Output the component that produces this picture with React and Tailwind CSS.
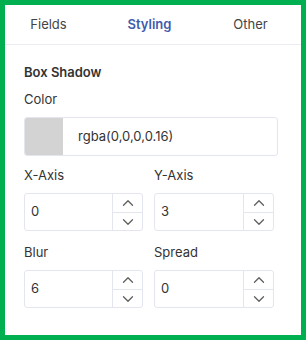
import { ChevronDown, ChevronUp } from "lucide-react";

const TABS = ["Fields", "Styling", "Other"];

function NumberField({ label, value, className = "" }) {
  return (
    <div className={className}>
      <p className="text-[13px] leading-5 text-[#333]">{label}</p>
      <div className="mt-2 flex h-[38px] rounded-[3px] border border-[#e3e6ee] bg-white">
        <div className="flex flex-1 items-center pl-[6px] text-[13px] text-[#333]">{value}</div>
        <div className="flex w-[30px] flex-col border-l border-[#e3e6ee]">
          <button type="button" className="flex flex-1 items-center justify-center text-[#5f5f5f]">
            <ChevronUp size={18} strokeWidth={1.7} />
          </button>
          <button
            type="button"
            className="flex flex-1 items-center justify-center border-t border-[#e3e6ee] text-[#5f5f5f]"
          >
            <ChevronDown size={18} strokeWidth={1.7} />
          </button>
        </div>
      </div>
    </div>
  );
}

export default function App() {
  return (
    <div
      className="h-[340px] w-[306px] overflow-hidden border-[5px] border-[#00b050] bg-white"
      style={{ fontFamily: "Inter, 'Noto Sans', sans-serif" }}
    >
      <div className="flex h-[40px] items-center border-b border-[#ebebf3]">
        <div className="-ml-[7px] grid w-[303px] grid-cols-3">
          {TABS.map((tab) => (
            <span
              key={tab}
              className={
                tab === "Styling"
                  ? "text-center text-[13px] font-semibold text-[#3f5dab]"
                  : "text-center text-[13px] text-[#444]"
              }
            >
              {tab}
            </span>
          ))}
        </div>
      </div>

      <div className="px-[19px] pt-[17px]">
        <p className="text-[13px] font-semibold leading-5 text-[#333]">Box Shadow</p>
        <p className="mt-[7px] text-[13px] leading-5 text-[#333]">Color</p>
        <div className="mt-2 flex h-[39px] w-[254px] overflow-hidden rounded-[3px] border border-[#e3e6ee]">
          <div className="w-[38px] bg-[#d3d3d3]" />
          <div className="flex items-center pl-[15px] text-[13px] text-[#333]">rgba(0,0,0,0.16)</div>
        </div>

        <div className="mt-[9px] flex gap-[11px]">
          <NumberField label="X-Axis" value="0" className="w-[119px]" />
          <NumberField label="Y-Axis" value="3" className="w-[120px]" />
        </div>
        <div className="mt-[11px] flex gap-[11px]">
          <NumberField label="Blur" value="6" className="w-[119px]" />
          <NumberField label="Spread" value="0" className="w-[120px]" />
        </div>
      </div>
    </div>
  );
}
